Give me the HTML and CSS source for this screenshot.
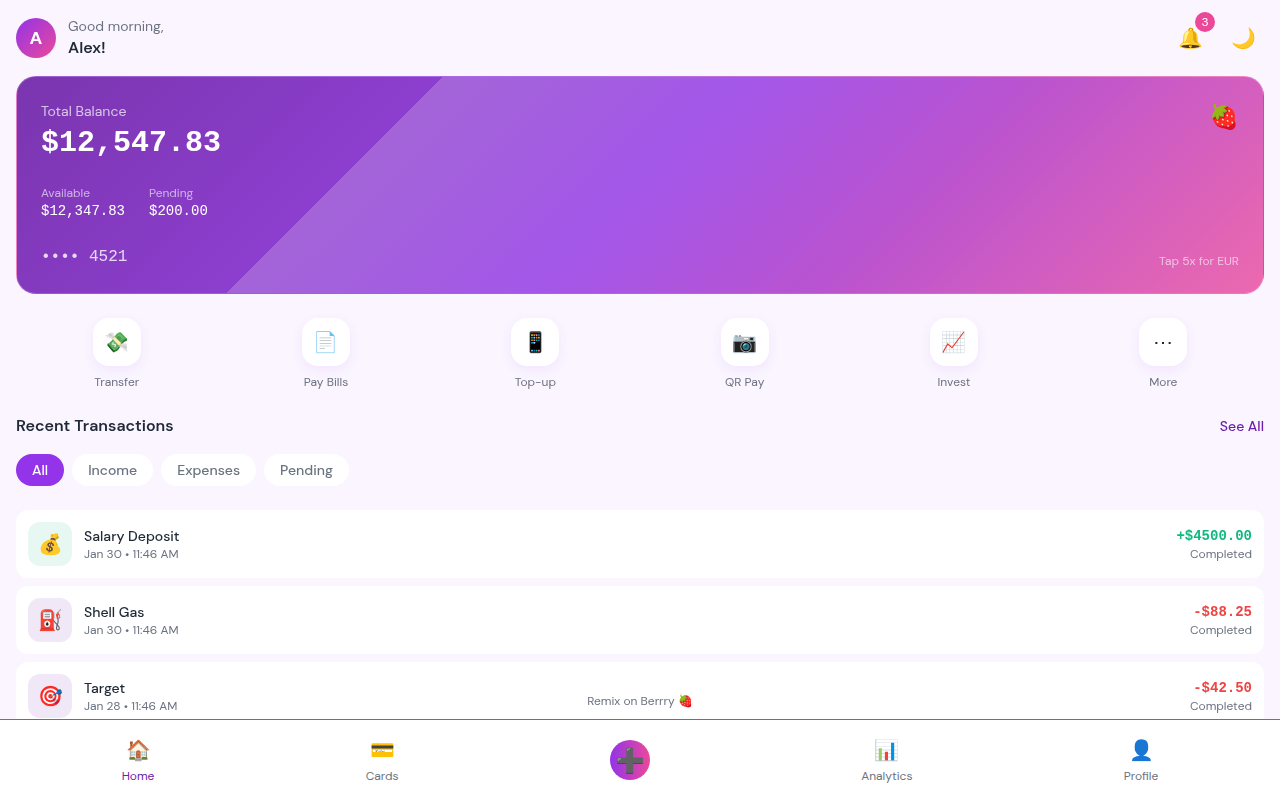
FILE: index.html
```html
<!DOCTYPE html>
<html lang="en">
<head>
    <meta charset="UTF-8">
    <title>Wallet</title>
    <link rel="stylesheet" href="styles.css">
</head>
<body>
    <div class="page">
        <header class="top">
            <div class="user">
                <div class="avatar">A</div>
                <div>
                    <p class="hello">Good morning,</p>
                    <p class="name">Alex!</p>
                </div>
            </div>
            <div class="top-actions">
                <div class="icon-btn">🔔<span class="badge">3</span></div>
                <div class="icon-btn">🌙</div>
            </div>
        </header>

        <section class="card">
            <div class="shine"></div>
            <div class="card-body">
                <div class="card-main">
                    <p class="card-label">Total Balance</p>
                    <p class="balance">$12,547.83</p>
                    <div class="subs">
                        <div>
                            <p class="sub-label">Available</p>
                            <p class="sub-value">$12,347.83</p>
                        </div>
                        <div>
                            <p class="sub-label">Pending</p>
                            <p class="sub-value">$200.00</p>
                        </div>
                    </div>
                    <p class="card-number">•••• 4521</p>
                </div>
                <div class="card-side">
                    <span class="berry">🍓</span>
                    <span class="tap">Tap 5x for EUR</span>
                </div>
            </div>
        </section>

        <section class="quick">
            <div class="quick-item"><div class="quick-icon">💸</div><span>Transfer</span></div>
            <div class="quick-item"><div class="quick-icon">📄</div><span>Pay Bills</span></div>
            <div class="quick-item"><div class="quick-icon">📱</div><span>Top-up</span></div>
            <div class="quick-item"><div class="quick-icon">📷</div><span>QR Pay</span></div>
            <div class="quick-item"><div class="quick-icon">📈</div><span>Invest</span></div>
            <div class="quick-item"><div class="quick-icon">⋯</div><span>More</span></div>
        </section>

        <div class="section-head">
            <h2>Recent Transactions</h2>
            <a class="see-all">See All</a>
        </div>

        <div class="filters">
            <span class="chip active">All</span>
            <span class="chip">Income</span>
            <span class="chip">Expenses</span>
            <span class="chip">Pending</span>
        </div>

        <div class="list">
            <div class="tx">
                <div class="tx-icon green">💰</div>
                <div class="tx-info">
                    <p class="tx-name">Salary Deposit</p>
                    <p class="tx-date">Jan 30 • 11:46 AM</p>
                </div>
                <div class="tx-right">
                    <p class="tx-amount plus">+$4500.00</p>
                    <p class="tx-status">Completed</p>
                </div>
            </div>
            <div class="tx">
                <div class="tx-icon">⛽</div>
                <div class="tx-info">
                    <p class="tx-name">Shell Gas</p>
                    <p class="tx-date">Jan 30 • 11:46 AM</p>
                </div>
                <div class="tx-right">
                    <p class="tx-amount minus">-$88.25</p>
                    <p class="tx-status">Completed</p>
                </div>
            </div>
            <div class="tx">
                <div class="tx-icon">🎯</div>
                <div class="tx-info">
                    <p class="tx-name">Target</p>
                    <p class="tx-date">Jan 28 • 11:46 AM</p>
                </div>
                <div class="tx-right">
                    <p class="tx-amount minus">-$42.50</p>
                    <p class="tx-status">Completed</p>
                </div>
            </div>
        </div>
    </div>

    <div class="remix">Remix on Berrry 🍓</div>

    <nav class="bottom-nav">
        <div class="nav-item active"><span class="nav-icon">🏠</span><span>Home</span></div>
        <div class="nav-item"><span class="nav-icon">💳</span><span>Cards</span></div>
        <div class="nav-add">➕</div>
        <div class="nav-item"><span class="nav-icon">📊</span><span>Analytics</span></div>
        <div class="nav-item"><span class="nav-icon">👤</span><span>Profile</span></div>
    </nav>
</body>
</html>
```

FILE: styles.css
```css
* {
    box-sizing: border-box;
}
html, body {
    height: 100%;
}
body {
    margin: 0;
    height: 800px;
    overflow: hidden;
    font-family: "DM Sans", Inter, sans-serif;
    background-color: #faf5ff;
    color: #1f2937;
}
p, h2 {
    margin: 0;
}
.page {
    padding: 16px 16px 0;
    will-change: transform;
}
.top {
    display: flex;
    justify-content: space-between;
    align-items: center;
    height: 44px;
    margin-bottom: 16px;
}
.user {
    display: flex;
    align-items: center;
    gap: 12px;
}
.avatar {
    width: 40px;
    height: 40px;
    border-radius: 50%;
    background: linear-gradient(135deg, #9333ea, #ec4899);
    color: white;
    font-weight: 700;
    font-size: 18px;
    display: flex;
    align-items: center;
    justify-content: center;
}
.hello {
    font-size: 14px;
    line-height: 20px;
    color: #6b7280;
}
.name {
    font-size: 16px;
    line-height: 24px;
    font-weight: 600;
}
.top-actions {
    display: flex;
    gap: 12px;
}
.icon-btn {
    position: relative;
    height: 44px;
    padding: 0 8px;
    font-size: 20px;
    display: flex;
    align-items: center;
    justify-content: center;
}
.badge {
    position: absolute;
    top: -4px;
    right: -4px;
    width: 20px;
    height: 20px;
    border-radius: 50%;
    background-color: #ec4899;
    color: white;
    font-size: 12px;
    display: flex;
    align-items: center;
    justify-content: center;
}
.card {
    position: relative;
    height: 218px;
    border-radius: 20px;
    border: 1px solid rgba(255, 255, 255, 0.2);
    background: linear-gradient(135deg, #7a35ae 0%, #9a45e6 50%, #ec69ae 100%);
    overflow: hidden;
    color: white;
}
.shine {
    position: absolute;
    inset: 0;
    background: linear-gradient(135deg, transparent 29.1%, rgba(255, 255, 255, 0.2) 29.1%, transparent 70%);
}
.card-body {
    position: relative;
    display: flex;
    justify-content: space-between;
    height: 100%;
    padding: 24px;
}
.card-label {
    font-size: 14px;
    line-height: 20px;
    opacity: 0.7;
}
.balance {
    font-family: "Liberation Mono", monospace;
    font-size: 30px;
    line-height: 36px;
    font-weight: 700;
    margin-top: 4px;
    margin-bottom: 24px;
}
.subs {
    display: flex;
    gap: 24px;
    margin-bottom: 24px;
}
.sub-label {
    font-size: 12px;
    line-height: 16px;
    opacity: 0.6;
}
.sub-value {
    font-family: "Liberation Mono", monospace;
    font-size: 14px;
    line-height: 20px;
}
.card-number {
    font-family: "Liberation Mono", monospace;
    font-size: 16px;
    line-height: 24px;
    opacity: 0.8;
}
.card-side {
    display: flex;
    flex-direction: column;
    justify-content: space-between;
    align-items: flex-end;
}
.berry {
    font-size: 24px;
}
.tap {
    font-size: 12px;
    opacity: 0.6;
}
.quick {
    display: grid;
    grid-template-columns: repeat(6, 1fr);
    gap: 8px;
    margin: 24px 0;
}
.quick-item {
    display: flex;
    flex-direction: column;
    align-items: center;
    gap: 8px;
    font-size: 12px;
    line-height: 16px;
    color: #6b7280;
}
.quick-icon {
    width: 48px;
    height: 48px;
    border-radius: 16px;
    background-color: white;
    box-shadow: 0 4px 12px rgba(147, 51, 234, 0.08);
    font-size: 20px;
    color: #1f2937;
    display: flex;
    align-items: center;
    justify-content: center;
}
.section-head {
    display: flex;
    justify-content: space-between;
    align-items: center;
    margin-bottom: 16px;
}
h2 {
    font-size: 16px;
    line-height: 24px;
    font-weight: 600;
}
.see-all {
    font-size: 14px;
    font-weight: 500;
    color: #6b21a8;
}
.filters {
    display: flex;
    gap: 8px;
    margin-bottom: 24px;
}
.chip {
    padding: 6px 16px;
    border-radius: 16px;
    background-color: white;
    font-size: 14px;
    line-height: 20px;
    font-weight: 500;
    color: #6b7280;
}
.chip.active {
    background-color: #9333ea;
    color: white;
}
.list {
    display: flex;
    flex-direction: column;
    gap: 8px;
}
.tx {
    display: flex;
    align-items: center;
    gap: 12px;
    height: 68px;
    padding: 12px;
    border-radius: 12px;
    background-color: white;
}
.tx-icon {
    width: 44px;
    height: 44px;
    border-radius: 12px;
    background-color: rgba(107, 33, 168, 0.1);
    font-size: 20px;
    display: flex;
    align-items: center;
    justify-content: center;
}
.tx-icon.green {
    background-color: rgba(16, 185, 129, 0.1);
}
.tx-info {
    flex: 1;
}
.tx-name {
    font-size: 14px;
    line-height: 20px;
    font-weight: 500;
}
.tx-date, .tx-status {
    font-size: 12px;
    line-height: 16px;
    color: #6b7280;
}
.tx-right {
    text-align: right;
}
.tx-amount {
    font-family: "Liberation Mono", monospace;
    font-size: 14px;
    line-height: 20px;
    font-weight: 700;
}
.plus {
    color: #10b981;
}
.minus {
    color: #ef4444;
}
.remix {
    position: fixed;
    left: 0;
    right: 0;
    bottom: 91px;
    text-align: center;
    font-size: 12px;
    line-height: 16px;
    color: #6b7280;
}
.bottom-nav {
    position: fixed;
    left: 0;
    right: 0;
    bottom: 0;
    height: 81px;
    padding: 0 16px;
    background-color: white;
    border-top: 1px solid #6b7280;
    display: flex;
    justify-content: space-around;
    align-items: center;
}
.nav-item {
    display: flex;
    flex-direction: column;
    align-items: center;
    gap: 4px;
    font-size: 12px;
    line-height: 16px;
    color: #6b7280;
}
.nav-item.active {
    color: #6b21a8;
}
.nav-icon {
    font-size: 20px;
    line-height: 28px;
}
.nav-add {
    width: 40px;
    height: 40px;
    border-radius: 50%;
    background: linear-gradient(90deg, #9333ea, #ec4899);
    font-size: 24px;
    display: flex;
    align-items: center;
    justify-content: center;
}
```
